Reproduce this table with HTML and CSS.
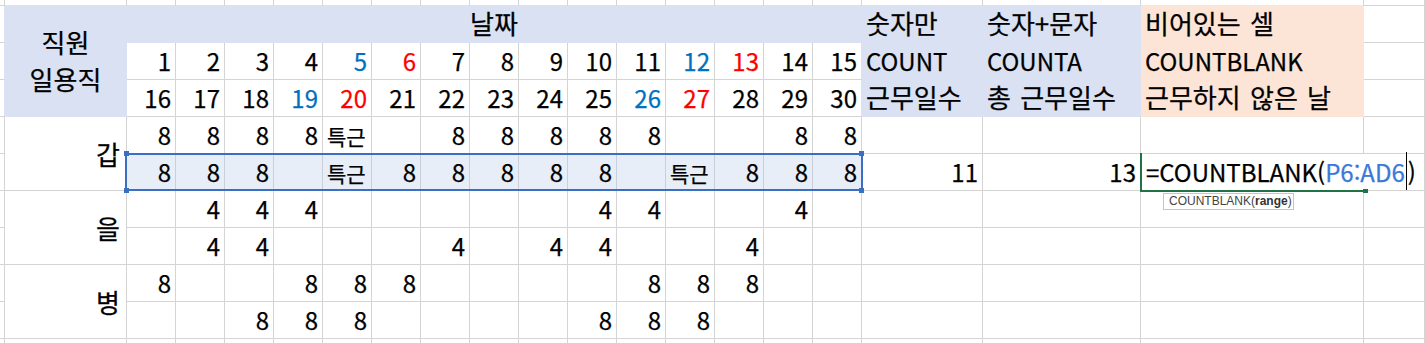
FILE: index.html
```html
<!DOCTYPE html>
<html lang="ko">
<head>
<meta charset="utf-8">
<title>COUNTBLANK</title>
<link rel="stylesheet" href="styles.css">
</head>
<body>
<div class="sheet">
  <!-- row 0 (partial) -->
  <div class="c"></div>
  <div class="c eb"></div>
  <div class="c eb"></div><div class="c eb"></div><div class="c eb"></div><div class="c eb"></div><div class="c eb"></div>
  <div class="c eb"></div><div class="c eb"></div><div class="c eb"></div><div class="c eb"></div><div class="c eb"></div>
  <div class="c eb"></div><div class="c eb"></div><div class="c eb"></div><div class="c eb"></div><div class="c eb"></div>
  <div class="c eb"></div><div class="c eb"></div><div class="c ep"></div>
  <div class="c"></div>

  <!-- row 1 -->
  <div class="c er"></div>
  <div class="c hd head-a"><span>직원</span><span>일용직</span></div>
  <div class="c hd ko head-date">날짜</div>
  <div class="c hd ko t">숫자만</div>
  <div class="c hd ko t">숫자+문자</div>
  <div class="c pk ko t">비어있는 셀</div>
  <div class="c"></div>

  <!-- row 2 -->
  <div class="c er"></div>
  <div class="c n">1</div><div class="c n">2</div><div class="c n">3</div><div class="c n">4</div>
  <div class="c n blue">5</div><div class="c n red">6</div><div class="c n">7</div><div class="c n">8</div>
  <div class="c n">9</div><div class="c n">10</div><div class="c n">11</div><div class="c n blue">12</div>
  <div class="c n red">13</div><div class="c n">14</div><div class="c n er">15</div>
  <div class="c hd t">COUNT</div>
  <div class="c hd t">COUNTA</div>
  <div class="c pk t">COUNTBLANK</div>
  <div class="c"></div>

  <!-- row 3 -->
  <div class="c er"></div>
  <div class="c n">16</div><div class="c n">17</div><div class="c n">18</div><div class="c n blue">19</div>
  <div class="c n red">20</div><div class="c n">21</div><div class="c n">22</div><div class="c n">23</div>
  <div class="c n">24</div><div class="c n">25</div><div class="c n blue">26</div><div class="c n red">27</div>
  <div class="c n">28</div><div class="c n">29</div><div class="c n er">30</div>
  <div class="c hd ko t">근무일수</div>
  <div class="c hd ko t">총 근무일수</div>
  <div class="c pk ko t">근무하지 않은 날</div>
  <div class="c"></div>

  <!-- row 4 : 갑 -->
  <div class="c"></div>
  <div class="c lbl">갑</div>
  <div class="c n">8</div><div class="c n">8</div><div class="c n">8</div><div class="c n">8</div>
  <div class="c t sm">특근</div><div class="c"></div><div class="c n">8</div><div class="c n">8</div>
  <div class="c n">8</div><div class="c n">8</div><div class="c n">8</div><div class="c"></div>
  <div class="c"></div><div class="c n">8</div><div class="c n">8</div>
  <div class="c"></div><div class="c"></div><div class="c"></div><div class="c"></div>

  <!-- row 5 : 갑 (referenced range) -->
  <div class="c"></div>
  <div class="c n sel anchor">8
    <div class="range">
      <span class="h h-tl"></span><span class="h h-tr"></span>
      <span class="h h-bl"></span><span class="h h-br"></span>
    </div>
  </div>
  <div class="c n sel">8</div><div class="c n sel">8</div><div class="c sel"></div>
  <div class="c t sm sel">특근</div><div class="c n sel">8</div><div class="c n sel">8</div><div class="c n sel">8</div>
  <div class="c n sel">8</div><div class="c n sel">8</div><div class="c sel"></div><div class="c t sm sel">특근</div>
  <div class="c n sel">8</div><div class="c n sel">8</div><div class="c n sel">8</div>
  <div class="c n">11</div>
  <div class="c n">13</div>
  <div class="c active">
    <span class="formula">=COUNTBLANK(<span class="ref">P6:AD6</span><span class="caret"></span>)</span>
    <div class="cell-frame"><span class="fill-handle"></span></div>
    <div class="tip">COUNTBLANK(<b>range</b>)</div>
  </div>
  <div class="c"></div>

  <!-- row 6 : 을 -->
  <div class="c"></div>
  <div class="c lbl">을</div>
  <div class="c"></div><div class="c n">4</div><div class="c n">4</div><div class="c n">4</div>
  <div class="c"></div><div class="c"></div><div class="c"></div><div class="c"></div>
  <div class="c"></div><div class="c n">4</div><div class="c n">4</div><div class="c"></div>
  <div class="c"></div><div class="c n">4</div><div class="c"></div>
  <div class="c"></div><div class="c"></div><div class="c"></div><div class="c"></div>

  <!-- row 7 -->
  <div class="c"></div>
  <div class="c"></div><div class="c n">4</div><div class="c n">4</div><div class="c"></div>
  <div class="c"></div><div class="c"></div><div class="c n">4</div><div class="c"></div>
  <div class="c n">4</div><div class="c n">4</div><div class="c"></div><div class="c"></div>
  <div class="c n">4</div><div class="c"></div><div class="c"></div>
  <div class="c"></div><div class="c"></div><div class="c"></div><div class="c"></div>

  <!-- row 8 : 병 -->
  <div class="c"></div>
  <div class="c lbl">병</div>
  <div class="c n">8</div><div class="c"></div><div class="c"></div><div class="c n">8</div>
  <div class="c n">8</div><div class="c n">8</div><div class="c"></div><div class="c"></div>
  <div class="c"></div><div class="c"></div><div class="c n">8</div><div class="c n">8</div>
  <div class="c n">8</div><div class="c"></div><div class="c"></div>
  <div class="c"></div><div class="c"></div><div class="c"></div><div class="c"></div>

  <!-- row 9 -->
  <div class="c"></div>
  <div class="c"></div><div class="c"></div><div class="c n">8</div><div class="c n">8</div>
  <div class="c n">8</div><div class="c"></div><div class="c"></div><div class="c"></div>
  <div class="c"></div><div class="c n">8</div><div class="c n">8</div><div class="c n">8</div>
  <div class="c"></div><div class="c"></div><div class="c"></div>
  <div class="c"></div><div class="c"></div><div class="c"></div><div class="c"></div>

  <!-- row 10 (partial) -->
  <div class="c"></div>
  <div class="c"></div>
  <div class="c"></div><div class="c"></div><div class="c"></div><div class="c"></div><div class="c"></div>
  <div class="c"></div><div class="c"></div><div class="c"></div><div class="c"></div><div class="c"></div>
  <div class="c"></div><div class="c"></div><div class="c"></div><div class="c"></div><div class="c"></div>
  <div class="c"></div><div class="c"></div><div class="c"></div>
  <div class="c"></div>
</div>
</body>
</html>
```

FILE: styles.css
```css
* {
  box-sizing: border-box;
}

html,
body {
  margin: 0;
  padding: 0;
  background: #ffffff;
}

body {
  width: 1425px;
  height: 344px;
  overflow: hidden;
  font-family: "Noto Sans CJK KR", "Malgun Gothic", sans-serif;
  font-size: 24px;
  font-weight: 400;
  color: #000000;
  -webkit-text-stroke: 0.25px currentColor;
}

.sheet {
  display: grid;
  grid-template-columns: 5px 122px repeat(15, 49px) 121px 158px 223px 1fr;
  grid-template-rows: 6px repeat(9, 37px) 5px;
}

.c {
  display: flex;
  align-items: flex-start;
  min-width: 0;
  line-height: 36px;
  white-space: nowrap;
  border-right: 1px solid #d4d4d4;
  border-bottom: 1px solid #d4d4d4;
}

/* Korean header text is set a little larger, like the sheet's Hangul face */
.ko {
  font-size: 26px;
  line-height: 34px;
  word-spacing: 2px;
}

/* small "특근" entries */
.sm {
  font-size: 21px;
  line-height: 32px;
  padding-top: 3px;
}

/* alignment */
.n {
  justify-content: flex-end;
  padding-right: 4px;
}

.t {
  padding-left: 4px;
}

.blue {
  color: #0070c0;
}

.red {
  color: #ff0000;
}

/* fills */
.hd {
  background: #d9e1f2;
  border-color: #d9e1f2;
}

.pk {
  background: #fce4d6;
  border-color: #fce4d6;
}

.eb {
  border-bottom-color: #d9e1f2;
}

.ep {
  border-bottom-color: #fce4d6;
}

.er {
  border-right-color: #d9e1f2;
}

.head-a {
  grid-row: span 3;
  flex-direction: column;
  align-items: center;
  justify-content: center;
  font-size: 26px;
  line-height: 37px;
  padding-bottom: 3px;
}

.head-date {
  grid-column: span 15;
  justify-content: center;
}

/* name labels, merged over two rows */
.lbl {
  grid-row: span 2;
  align-items: center;
  justify-content: flex-end;
  padding-right: 6px;
  font-size: 26px;
}

/* referenced range B5:P5 */
.sel {
  background: #e8eef8;
  border-right-color: #c9d0db;
}

.anchor {
  position: relative;
  z-index: 1;
}

.range {
  position: absolute;
  left: -2px;
  top: -1px;
  width: 738px;
  height: 38px;
  border: 2px solid #3a6fc4;
  pointer-events: none;
}

.h {
  position: absolute;
  width: 5px;
  height: 5px;
  background: #3a6fc4;
}

.h-tl { left: -3px; top: -4px; }
.h-tr { left: 732px; top: -4px; }
.h-bl { left: -3px; top: 33px; }
.h-br { left: 732px; top: 33px; }

/* active cell in edit mode */
.active {
  position: relative;
  z-index: 2;
  padding-left: 5px;
  border-right-color: transparent;
  overflow: visible;
}

.formula {
  background: #ffffff;
  padding-right: 8px;
}

.ref {
  color: #3c78d8;
}

.caret {
  display: inline-block;
  position: relative;
  width: 1px;
  height: 0;
  margin: 0 1px;
}

.caret::after {
  content: "";
  position: absolute;
  left: 0;
  bottom: -8px;
  width: 1px;
  height: 38px;
  background: #000000;
}

.cell-frame {
  position: absolute;
  left: -1px;
  top: -1px;
  width: 224px;
  height: 39px;
  border-left: 2px solid #217346;
  border-bottom: 2px solid #217346;
  pointer-events: none;
}

.fill-handle {
  position: absolute;
  left: 221px;
  top: 36px;
  width: 5px;
  height: 4px;
  background: #217346;
}

.tip {
  position: absolute;
  left: 22px;
  top: 39px;
  width: 131px;
  height: 17px;
  padding-left: 5px;
  border: 1px solid #c6c6c6;
  background: #ffffff;
  color: #444444;
  font-family: "Liberation Sans", Arial, sans-serif;
  font-size: 12px;
  font-weight: 400;
  line-height: 15px;
  word-spacing: 0;
  white-space: nowrap;
  -webkit-text-stroke: 0;
}

.tip b {
  font-weight: bold;
  color: #333333;
}
```
